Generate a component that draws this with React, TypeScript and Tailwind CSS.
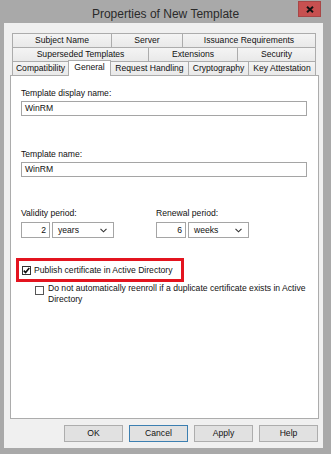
import React from 'react';

type Tab = { label: string; w: string; active?: boolean };

const ROWS: Tab[][] = [
  [
    { label: 'Subject Name', w: 'w-[100px]' },
    { label: 'Server', w: 'w-[72px]' },
    { label: 'Issuance Requirements', w: 'w-[134px]' },
  ],
  [
    { label: 'Superseded Templates', w: 'w-[137px]' },
    { label: 'Extensions', w: 'w-[90px]' },
    { label: 'Security', w: 'w-[79px]' },
  ],
  [
    { label: 'Compatibility', w: 'w-[57px]' },
    { label: 'General', w: 'w-[43px]', active: true },
    { label: 'Request Handling', w: 'w-[79px]' },
    { label: 'Cryptography', w: 'w-[61px]' },
    { label: 'Key Attestation', w: 'w-[68px]' },
  ],
];

const TabRow: React.FC<{ tabs: Tab[]; last?: boolean; first?: boolean }> = ({ tabs, last, first }) => (
  <div className={`flex ${last ? 'items-end h-[14px]' : 'h-[15px]'} ${first ? '' : '-mt-px'}`}>
    {tabs.map((t, i) => (
      <div
        key={t.label}
        className={`${t.w} ${i > 0 ? '-ml-px' : ''} flex items-center justify-center border-[#acacac] whitespace-nowrap ${
          t.active
            ? 'relative z-10 h-[16px] -mb-px border-l border-t border-r bg-white pb-[2px]'
            : last
            ? 'h-[14px] border-l border-t border-r bg-gradient-to-b from-[#f4f4f4] to-[#e9e9e9]'
            : 'h-[15px] border bg-gradient-to-b from-[#f4f4f4] to-[#e9e9e9]'
        }`}
      >
        {t.label}
      </div>
    ))}
  </div>
);

const Check = () => (
  <svg width="7" height="7" viewBox="0 0 7 7">
    <path d="M0.8 3.6 L2.6 5.6 L6.3 0.9" stroke="#111" strokeWidth="1.6" fill="none" />
  </svg>
);

const Chevron = () => (
  <svg width="7" height="5" viewBox="0 0 7 5">
    <path d="M0.5 0.8 L3.5 3.8 L6.5 0.8" stroke="#333" strokeWidth="1.1" fill="none" />
  </svg>
);

const Period: React.FC<{ label: string; n: string; unit: string; nw: string; sw: string }> = ({ label, n, unit, nw, sw }) => (
  <div className="flex flex-col">
    <div className="h-[12px] leading-[12px]">{label}</div>
    <div className="mt-[3px] flex gap-[2px]">
      <div className={`${nw} h-[16px] border border-[#a5a5a5] bg-white text-right pr-[3px] leading-[14px]`}>{n}</div>
      <div className={`${sw} h-[16px] border border-[#a5a5a5] bg-white flex items-center justify-between pl-[5px] pr-[6px]`}>
        <span className="leading-[14px]">{unit}</span>
        <Chevron />
      </div>
    </div>
  </div>
);

const Button: React.FC<{ label: string; focus?: boolean }> = ({ label, focus }) => (
  <div
    className={`w-[59px] h-[17px] flex items-center justify-center bg-[#e1e1e1] border ${
      focus ? 'border-[#3c7fb1]' : 'border-[#adadad]'
    }`}
  >
    {label}
  </div>
);

export default function App() {
  return (
    <div className="w-[331px] h-[454px] bg-[#a9a9a9] flex flex-col font-['Liberation_Sans',Arial,sans-serif] text-[8.6px] text-[#111]">
      <div className="h-[23px] grid grid-cols-[1fr_auto_1fr]">
        <div />
        <div className="pt-[7px] leading-[14px] text-[12px] text-[#2a2a2a]">Properties of New Template</div>
        <div className="flex justify-end pr-[10px] pt-[1px]">
          <div className="w-[23px] h-[16px] bg-[#c75050] border border-[#a84646] flex items-center justify-center">
            <svg width="8" height="7" viewBox="0 0 8 7">
              <path d="M1 0.8 L7 6.2 M7 0.8 L1 6.2" stroke="#111" strokeWidth="2" />
            </svg>
          </div>
        </div>
      </div>

      <div className="ml-[4px] w-[319px] h-[425px] bg-[#f0f0f0] flex flex-col pl-[6px] pr-[4px] pt-[10px] pb-[6px]">
        <div className="pl-[2px] flex flex-col">
          <TabRow tabs={ROWS[0]} first />
          <TabRow tabs={ROWS[1]} />
          <TabRow tabs={ROWS[2]} last />
        </div>

        <div className="flex-1 bg-white border border-[#acacac] flex flex-col pl-[10px] pr-[11px] pt-[11px]">
          <div className="h-[12px] leading-[12px]">Template display name:</div>
          <div className="mt-[2px] h-[15px] border border-[#a5a5a5] pl-[3px] leading-[13px]">WinRM</div>
          <div className="mt-[32px] h-[12px] leading-[12px]">Template name:</div>
          <div className="mt-[2px] h-[15px] border border-[#a5a5a5] pl-[3px] leading-[13px]">WinRM</div>

          <div className="mt-[30px] flex gap-[42px]">
            <Period label="Validity period:" n="2" unit="years" nw="w-[29px]" sw="w-[62px]" />
            <Period label="Renewal period:" n="6" unit="weeks" nw="w-[30px]" sw="w-[61px]" />
          </div>

          <div className="mt-[20px] -ml-[5px] w-[168px] h-[24px] border-[3px] border-[#e3141f] flex items-center pl-[3px] gap-[3px]">
            <div className="w-[9px] h-[9px] border border-[#333] bg-white flex items-center justify-center">
              <Check />
            </div>
            <span className="leading-[12px] whitespace-nowrap">Publish certificate in Active Directory</span>
          </div>

          <div className="mt-[1px] ml-[14px] flex items-start gap-[4px]">
            <div className="mt-[3px] w-[9px] h-[9px] border border-[#555] bg-white shrink-0" />
            <span className="leading-[11px]">
              Do not automatically reenroll if a duplicate certificate exists in Active
              <br />
              Directory
            </span>
          </div>
        </div>

        <div className="mt-[6px] flex justify-end gap-[6px] pr-[1px]">
          <Button label="OK" />
          <Button label="Cancel" focus />
          <Button label="Apply" />
          <Button label="Help" />
        </div>
      </div>
    </div>
  );
}
